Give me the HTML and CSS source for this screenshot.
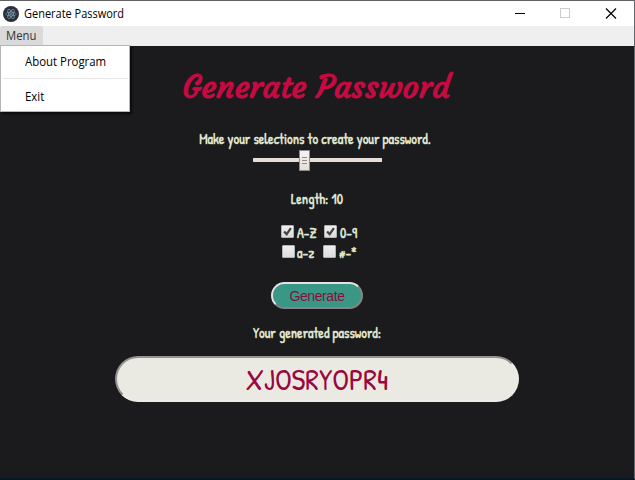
FILE: index.html
```html
<!DOCTYPE html>
<html lang="en">
<head>
<meta charset="utf-8">
<title>Generate Password</title>
<link rel="stylesheet" href="styles.css">
</head>
<body>
<div class="window">
  <header class="titlebar">
    <svg class="logo" viewBox="0 0 16 16" width="16" height="16">
      <circle cx="8" cy="8" r="8" fill="#2b2e3b"/>
      <g fill="none" stroke="#9fcfd9" stroke-opacity=".65" stroke-width=".7">
        <ellipse cx="8" cy="8" rx="5.3" ry="2"/>
        <ellipse cx="8" cy="8" rx="5.3" ry="2" transform="rotate(60 8 8)"/>
        <ellipse cx="8" cy="8" rx="5.3" ry="2" transform="rotate(120 8 8)"/>
      </g>
      <circle cx="8" cy="8" r=".8" fill="#9fcfd9"/>
    </svg>
    <span class="caption">Generate Password</span>
    <svg class="controls" viewBox="0 0 115 25" width="115" height="25" fill="none" shape-rendering="crispEdges">
      <path d="M0 12.5h10" stroke="#000"/>
      <rect x="45.5" y="7.500" width="9" height="9" stroke="#ccc"/>
      <path d="M91 7.500l10 10M101 7.500l-10 10" stroke="#000" stroke-width="1.200" shape-rendering="auto"/>
    </svg>
  </header>
  <nav class="menubar">
    <span class="menu-title"><span class="menu-text">Menu</span></span>
    <div class="dropdown">
      <div class="item about"><span>About Program</span></div>
      <div class="item exit"><span>Exit</span></div>
    </div>
  </nav>
  <main class="content">
    <h1>Generate Password</h1>
    <p class="hint">Make your selections to create your password.</p>
    <div class="slider"><div class="thumb"><i></i><i></i><i></i></div></div>
    <p class="length">Length: 10</p>
    <div class="options">
      <div class="row">
        <span class="box"><svg viewBox="0 0 13 13"><path d="M2.500 6.500l3 3.200L10.500 2.500"/></svg></span><label class="upper">A-Z</label>
        <span class="box"><svg viewBox="0 0 13 13"><path d="M2.500 6.500l3 3.200L10.500 2.500"/></svg></span><label>0-9</label>
      </div>
      <div class="row second">
        <span class="box"></span><label class="lower">a-z</label>
        <span class="box"></span><label class="symbols">#-*</label>
      </div>
    </div>
    <button class="generate">Generate</button>
    <p class="result-label">Your generated password:</p>
    <div class="result">XJOSRYOPR4</div>
  </main>
</div>
</body>
</html>
```
FILE: styles.css
```css
* { box-sizing: border-box; }
body { margin: 0; overflow: hidden; }
.window {
  width: 635px; height: 480px;
  display: flex; flex-direction: column;
  border-top: 1px solid #636166;
  border-right: 1px solid #63686c;
  border-bottom: 2px solid #021824;
  background: #1b1b1d;
}
.titlebar {
  height: 25px; padding-left: 3px;
  display: flex; align-items: center;
  background: #fff;
  font: 12px "Open Sans", sans-serif; color: #000;
}
.caption { margin-left: 5px; white-space: nowrap; transform: scaleX(.915); transform-origin: left; }
.controls { margin-left: auto; margin-right: 4px; }
.menubar {
  position: relative; height: 20px; flex: none;
  background: #efefef;
  font: 12px/20px "Open Sans", sans-serif; color: #333;
}
.menu-title { display: block; width: 43px; height: 19px; padding-left: 6px; background: #dadada; border-radius: 2px 2px 0 0; }
.menu-text { display: inline-block; transform: scaleX(.94); transform-origin: left; }
.dropdown {
  position: absolute; z-index: 2; left: 0; top: 19px;
  width: 130px; height: 67px;
  border: 1px solid #b5b5b5; background: #fff;
  box-shadow: 2px 2px 2px #0b0b0c;
}
.item { margin: 0 1px; padding-left: 23px; color: #000; }
.item span { display: inline-block; white-space: nowrap; transform: scaleX(.95); transform-origin: left; }
.about { height: 33px; line-height: 32px; border-bottom: 1px solid #e5e5e5; }
.exit { height: 32px; line-height: 36px; }
.content {
  flex: 1; display: flex; flex-direction: column; align-items: center;
  font: bold 14px "Patrick Hand", Lato, sans-serif; color: #dde2cc;
}
h1, p { margin: 0; white-space: nowrap; }
h1 {
  height: 80px; margin-right: 2px;
  font: normal 32px/82px Courgette, Lato, sans-serif;
  -webkit-text-stroke: .9px #c70a42; color: #c70a42;
}
.hint { height: 24px; line-height: 26px; margin-right: 4px; }
.slider { width: 129px; height: 22px; padding-left: 46px; background: linear-gradient(#e6ddd7, #e6ddd7) 0 8px / 100% 4px no-repeat; }
.thumb {
  width: 11px; height: 21px; padding: 6px 2px 0;
  display: flex; flex-direction: column; gap: 2px;
  border: 1px solid #8f8885; background: linear-gradient(#f5f3f1, #e6deda);
}
.thumb i { height: 1px; background: #918a87; }
.length { height: 53px; line-height: 53px; }
.options { height: 57px; display: flex; flex-direction: column; }
.row { height: 20px; width: 80px; margin-left: 8px; display: flex; align-items: flex-start; }
.box { width: 13px; height: 13px; flex: none; border: 1px solid #b2b2b2; border-radius: 1px; background: linear-gradient(#eee, #dcdcdc); }
.box svg { display: block; width: 11px; height: 11px; fill: none; stroke: #424242; stroke-width: 2.600; }
label { width: 20px; flex: none; line-height: 16px; margin-left: 3px; white-space: nowrap; }
.upper { margin-right: 7px; }
.second { padding-left: 1px; }
.second label { line-height: 16px; margin-left: 2px; }
.second .lower { width: 19px; margin-right: 7px; }
.second .symbols { margin-left: 3px; }
.generate {
  width: 92px; height: 27px; padding: 0;
  border: 2px solid; border-color: #e3e3e3 #858585 #858585 #e3e3e3; border-radius: 14px;
  background: #3a9785; color: #85103f;
  font: 14px "Liberation Sans", Arial, sans-serif; letter-spacing: -.4px;
}
.result-label { height: 47px; line-height: 48px; }
.result {
  width: 404px; height: 46px;
  display: flex; align-items: center; justify-content: center;
  border: 2px solid; border-color: #96938f #ecebe5 #ecebe5 #96938f; border-radius: 23px;
  background: #ebeae2; color: #99073f;
  font: 30px/42px "Patrick Hand", Lato, sans-serif;
}
```
